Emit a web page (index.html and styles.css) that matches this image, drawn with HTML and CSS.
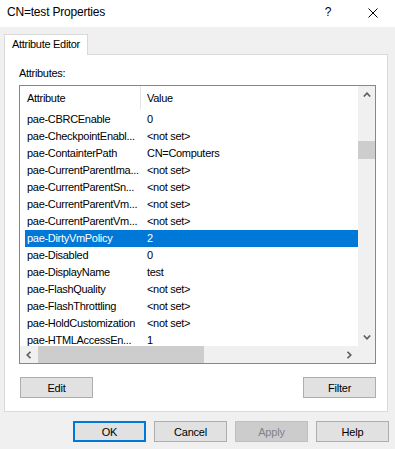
FILE: index.html
```html
<!DOCTYPE html>
<html lang="en">
<head>
    <meta charset="UTF-8">
    <title>CN=test Properties</title>
    <link rel="stylesheet" href="styles.css">
</head>
<body>
    <div class="titlebar">
        <span class="title">CN=test Properties</span>
        <span class="help">?</span>
        <svg class="close" width="10" height="10" viewBox="0 0 10 10"><path d="M0.5 0.5 L9.5 9.5 M9.5 0.5 L0.5 9.5" stroke="#000" stroke-width="1" fill="none"/></svg>
    </div>

    <div class="main">
        <div class="tabs">
            <div class="tab">Attribute Editor</div>
        </div>

        <div class="panel">
            <div class="label">Attributes:</div>

            <div class="list">
                <div class="rows">
                    <div class="row head">
                        <div class="cell name">Attribute</div>
                        <div class="cell">Value</div>
                    </div>
                    <div class="row"><div class="cell name">pae-CBRCEnable</div><div class="cell">0</div></div>
                    <div class="row"><div class="cell name">pae-CheckpointEnabl...</div><div class="cell">&lt;not set&gt;</div></div>
                    <div class="row"><div class="cell name">pae-ContainterPath</div><div class="cell">CN=Computers</div></div>
                    <div class="row"><div class="cell name">pae-CurrentParentIma...</div><div class="cell">&lt;not set&gt;</div></div>
                    <div class="row"><div class="cell name">pae-CurrentParentSn...</div><div class="cell">&lt;not set&gt;</div></div>
                    <div class="row"><div class="cell name">pae-CurrentParentVm...</div><div class="cell">&lt;not set&gt;</div></div>
                    <div class="row"><div class="cell name">pae-CurrentParentVm...</div><div class="cell">&lt;not set&gt;</div></div>
                    <div class="row selected"><div class="cell name">pae-DirtyVmPolicy</div><div class="cell">2</div></div>
                    <div class="row"><div class="cell name">pae-Disabled</div><div class="cell">0</div></div>
                    <div class="row"><div class="cell name">pae-DisplayName</div><div class="cell">test</div></div>
                    <div class="row"><div class="cell name">pae-FlashQuality</div><div class="cell">&lt;not set&gt;</div></div>
                    <div class="row"><div class="cell name">pae-FlashThrottling</div><div class="cell">&lt;not set&gt;</div></div>
                    <div class="row"><div class="cell name">pae-HoldCustomization</div><div class="cell">&lt;not set&gt;</div></div>
                    <div class="row"><div class="cell name">pae-HTMLAccessEn...</div><div class="cell">1</div></div>
                </div>

                <div class="vscroll">
                    <div class="arrow">
                        <svg width="8" height="5" viewBox="0 0 8 5"><path d="M0.8 4.5 L4 1.2 L7.2 4.5" stroke="#606060" stroke-width="1.7" fill="none"/></svg>
                    </div>
                    <div class="track"><div class="thumb"></div></div>
                    <div class="arrow">
                        <svg width="8" height="5" viewBox="0 0 8 5"><path d="M0.8 0.5 L4 3.8 L7.2 0.5" stroke="#606060" stroke-width="1.7" fill="none"/></svg>
                    </div>
                </div>

                <div class="hscroll">
                    <div class="arrow">
                        <svg width="5" height="8" viewBox="0 0 5 8"><path d="M4.5 0.8 L1.2 4 L4.5 7.2" stroke="#606060" stroke-width="1.7" fill="none"/></svg>
                    </div>
                    <div class="track"><div class="thumb"></div></div>
                    <div class="arrow">
                        <svg width="5" height="8" viewBox="0 0 5 8"><path d="M0.5 0.8 L3.8 4 L0.5 7.2" stroke="#606060" stroke-width="1.7" fill="none"/></svg>
                    </div>
                </div>

                <div class="corner"></div>
            </div>

            <div class="actions">
                <button class="btn edit">Edit</button>
                <button class="btn">Filter</button>
            </div>
        </div>

        <div class="footer">
            <button class="btn default">OK</button>
            <button class="btn">Cancel</button>
            <button class="btn" disabled>Apply</button>
            <button class="btn">Help</button>
        </div>
    </div>
</body>
</html>
```

FILE: styles.css
```css
* {
    box-sizing: border-box;
}
body {
    margin: 0;
    width: 395px;
    height: 449px;
    background: #f0f0f0;
    font-family: "Liberation Sans", Arial, sans-serif;
    font-size: 11px;
    letter-spacing: -0.3px;
    color: #000;
    overflow: hidden;
}
.titlebar {
    height: 27px;
    background: #fff;
    display: flex;
    align-items: center;
    padding: 0 17px 4px 7px;
}
.title {
    font-size: 12px;
    letter-spacing: -0.2px;
}
.help {
    margin-left: auto;
    margin-right: 37px;
    font-size: 12px;
}
.close {
    margin-top: 3px;
}
.main {
    padding: 7px 6px 0 4px;
}
.tabs {
    display: flex;
}
.tab {
    width: 84px;
    height: 21px;
    line-height: 19px;
    padding-left: 7px;
    background: #fff;
    border: 1px solid #d9d9d9;
    border-bottom: none;
    margin-bottom: -1px;
    position: relative;
    z-index: 1;
}
.panel {
    margin-right: 1px;
    height: 358px;
    background: #fff;
    border: 1px solid #d9d9d9;
    padding: 12px 11px 13px 14px;
}
.label {
    height: 13px;
    line-height: 13px;
    margin-bottom: 5px;
}
.list {
    height: 279px;
    border: 1px solid #828790;
    display: grid;
    grid-template-columns: 1fr 17px;
    grid-template-rows: 1fr 17px;
}
.rows {
    overflow: hidden;
    padding-left: 5px;
}
.row {
    display: grid;
    grid-template-columns: 116px 1fr;
    height: 17px;
    line-height: 17px;
    white-space: nowrap;
}
.row .cell {
    padding-left: 2px;
}
.row .cell + .cell {
    padding-left: 6px;
}
.row.head {
    height: 25px;
    line-height: 25px;
}
.row.head .name {
    border-right: 1px solid #e5e5e5;
    height: 24px;
}
.row.selected {
    background: #0078d7;
    color: #fff;
}
.vscroll {
    background: #f0f0f0;
    display: flex;
    flex-direction: column;
}
.vscroll .arrow {
    height: 17px;
    display: flex;
    align-items: center;
    justify-content: center;
}
.vscroll .track {
    flex: 1;
    padding-top: 38px;
}
.vscroll .thumb {
    height: 18px;
    background: #cdcdcd;
}
.hscroll {
    background: #f0f0f0;
    display: flex;
}
.hscroll .arrow {
    width: 17px;
    display: flex;
    align-items: center;
    justify-content: center;
}
.hscroll .track {
    flex: 1;
    padding-left: 1px;
}
.hscroll .thumb {
    width: 166px;
    height: 100%;
    background: #cdcdcd;
}
.corner {
    background: #f0f0f0;
}
.actions {
    display: flex;
    justify-content: space-between;
    margin-top: 13px;
}
.btn {
    width: 73px;
    height: 21px;
    padding: 0;
    background: #e1e1e1;
    border: 1px solid #adadad;
    font-family: "Liberation Sans", Arial, sans-serif;
    font-size: 11px;
    letter-spacing: -0.2px;
    color: #000;
}
.btn.edit {
    margin-left: 1px;
}
.btn.default {
    border: 2px solid #0078d7;
}
.btn:disabled {
    background: #cccccc;
    border-color: #bfbfbf;
    color: #838383;
}
.footer {
    display: flex;
    justify-content: flex-end;
    gap: 8px;
    margin-top: 9px;
}
```
